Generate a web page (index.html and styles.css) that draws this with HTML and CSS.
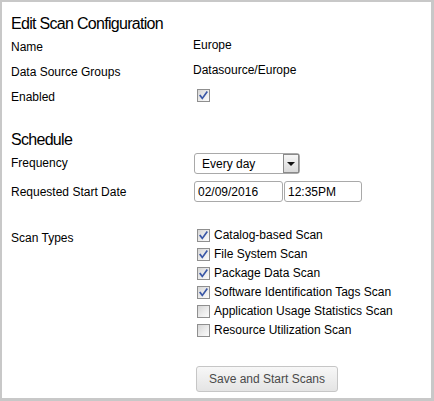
FILE: index.html
```html
<!DOCTYPE html>
<html>
<head>
<meta charset="utf-8">
<link rel="stylesheet" href="styles.css">
</head>
<body>
<div class="panel">
  <h2 class="title">Edit Scan Configuration</h2>
  <div class="row info first">
    <div class="lbl">Name</div>
    <div class="val">Europe</div>
  </div>
  <div class="row info">
    <div class="lbl">Data Source Groups</div>
    <div class="val">Datasource/Europe</div>
  </div>
  <div class="row info">
    <div class="lbl">Enabled</div>
    <div class="val"><span class="cb on cb-enabled"><svg viewBox="0 0 11 11" width="11" height="11"><path d="M2.2 5.6 L4.3 8.4 L8.8 2.2" fill="none" stroke="#3a57a6" stroke-width="1.7" stroke-linecap="square"/></svg></span></div>
  </div>

  <h2 class="title sched">Schedule</h2>
  <div class="row freq">
    <div class="lbl">Frequency</div>
    <div class="val">
      <div class="select"><span class="sel-text">Every day</span><span class="sel-btn"><span class="arrow"></span></span></div>
    </div>
  </div>
  <div class="row date">
    <div class="lbl">Requested Start Date</div>
    <div class="val inputs">
      <div class="input w-date">02/09/2016</div>
      <div class="input w-time">12:35PM</div>
    </div>
  </div>

  <div class="row scan">
    <div class="lbl">Scan Types</div>
    <div class="val list">
      <div class="item"><span class="cb on"><svg viewBox="0 0 11 11" width="11" height="11"><path d="M2.2 5.6 L4.3 8.4 L8.8 2.2" fill="none" stroke="#3a57a6" stroke-width="1.7" stroke-linecap="square"/></svg></span>Catalog-based Scan</div>
      <div class="item"><span class="cb on"><svg viewBox="0 0 11 11" width="11" height="11"><path d="M2.2 5.6 L4.3 8.4 L8.8 2.2" fill="none" stroke="#3a57a6" stroke-width="1.7" stroke-linecap="square"/></svg></span>File System Scan</div>
      <div class="item"><span class="cb on"><svg viewBox="0 0 11 11" width="11" height="11"><path d="M2.2 5.6 L4.3 8.4 L8.8 2.2" fill="none" stroke="#3a57a6" stroke-width="1.7" stroke-linecap="square"/></svg></span>Package Data Scan</div>
      <div class="item"><span class="cb on"><svg viewBox="0 0 11 11" width="11" height="11"><path d="M2.2 5.6 L4.3 8.4 L8.8 2.2" fill="none" stroke="#3a57a6" stroke-width="1.7" stroke-linecap="square"/></svg></span>Software Identification Tags Scan</div>
      <div class="item"><span class="cb"></span>Application Usage Statistics Scan</div>
      <div class="item"><span class="cb"></span>Resource Utilization Scan</div>
    </div>
  </div>

  <div class="actions">
    <button class="btn" type="button">Save and Start Scans</button>
  </div>
</div>
</body>
</html>
```

FILE: styles.css
```css
html, body {
  margin: 0;
  padding: 0;
  background: #fff;
}

.panel {
  box-sizing: border-box;
  width: 434px;
  height: 401px;
  border: solid #c8c8c8;
  border-width: 2px 3px 3px 2px;
  padding: 12px 0 0 9px;
  font-family: "Liberation Sans", Arial, sans-serif;
  font-size: 12px;
  color: #000;
  background: #fff;
}

.title {
  margin: 0;
  font-size: 16px;
  line-height: 20px;
  font-weight: normal;
  letter-spacing: -0.7px;
  color: #000;
}

.title.sched {
  margin-top: 17px;
}

.row {
  display: grid;
  grid-template-columns: 182px 1fr;
  line-height: 14px;
}

.info {
  height: 25px;
}

.info.first {
  margin-top: 4px;
}

.info .lbl {
  padding-top: 2px;
}

.cb {
  box-sizing: border-box;
  display: inline-flex;
  align-items: center;
  justify-content: center;
  width: 13px;
  height: 13px;
  border: 1px solid #8f8f8f;
  background: linear-gradient(135deg, #d6d6d6 0%, #eeeeee 60%, #fbfbfb 100%);
  flex: none;
}

.cb svg {
  display: block;
}

.cb-enabled {
  margin-left: 4px;
  margin-top: 1px;
}

.freq {
  margin-top: 3px;
  height: 28px;
}

.freq .lbl {
  padding-top: 3px;
}

.select {
  box-sizing: border-box;
  margin-left: 1px;
  width: 106px;
  height: 21px;
  border: 1px solid #a9a9a9;
  border-radius: 3px;
  display: flex;
  align-items: center;
  justify-content: space-between;
  background: #fff;
}

.sel-text {
  padding-left: 7px;
  font-size: 12px;
}

.sel-btn {
  box-sizing: border-box;
  width: 16px;
  height: 19px;
  border: 1px solid #8a8a8a;
  background: linear-gradient(#f6f6f6, #d9d9d9);
  display: flex;
  align-items: center;
  justify-content: center;
}

.arrow {
  width: 0;
  height: 0;
  border-left: 4px solid transparent;
  border-right: 4px solid transparent;
  border-top: 4px solid #111;
  margin-top: 1px;
}

.date {
  height: 21px;
}

.date .lbl {
  padding-top: 4px;
}

.inputs {
  display: flex;
  gap: 1px;
  margin-left: 1px;
}

.input {
  box-sizing: border-box;
  height: 21px;
  border: 1px solid #a9a9a9;
  border-radius: 3px;
  padding: 3px 0 0 3px;
  line-height: 14px;
  background: #fff;
}

.w-date {
  width: 89px;
}

.w-time {
  width: 78px;
}

.scan {
  margin-top: 24px;
}

.scan .lbl {
  padding-top: 5px;
}

.list {
  display: flex;
  flex-direction: column;
}

.item {
  height: 19px;
  line-height: 19px;
  display: flex;
  align-items: center;
  gap: 4px;
  padding-left: 4px;
}

.actions {
  margin-top: 26px;
  padding-left: 185px;
}

.btn {
  box-sizing: border-box;
  width: 142px;
  height: 26px;
  padding: 0;
  border: 1px solid #c6c6c6;
  border-radius: 3px;
  background: linear-gradient(#f7f7f7, #e4e4e4);
  font-family: "Liberation Sans", Arial, sans-serif;
  font-size: 12px;
  color: #4a4a4a;
}
```
